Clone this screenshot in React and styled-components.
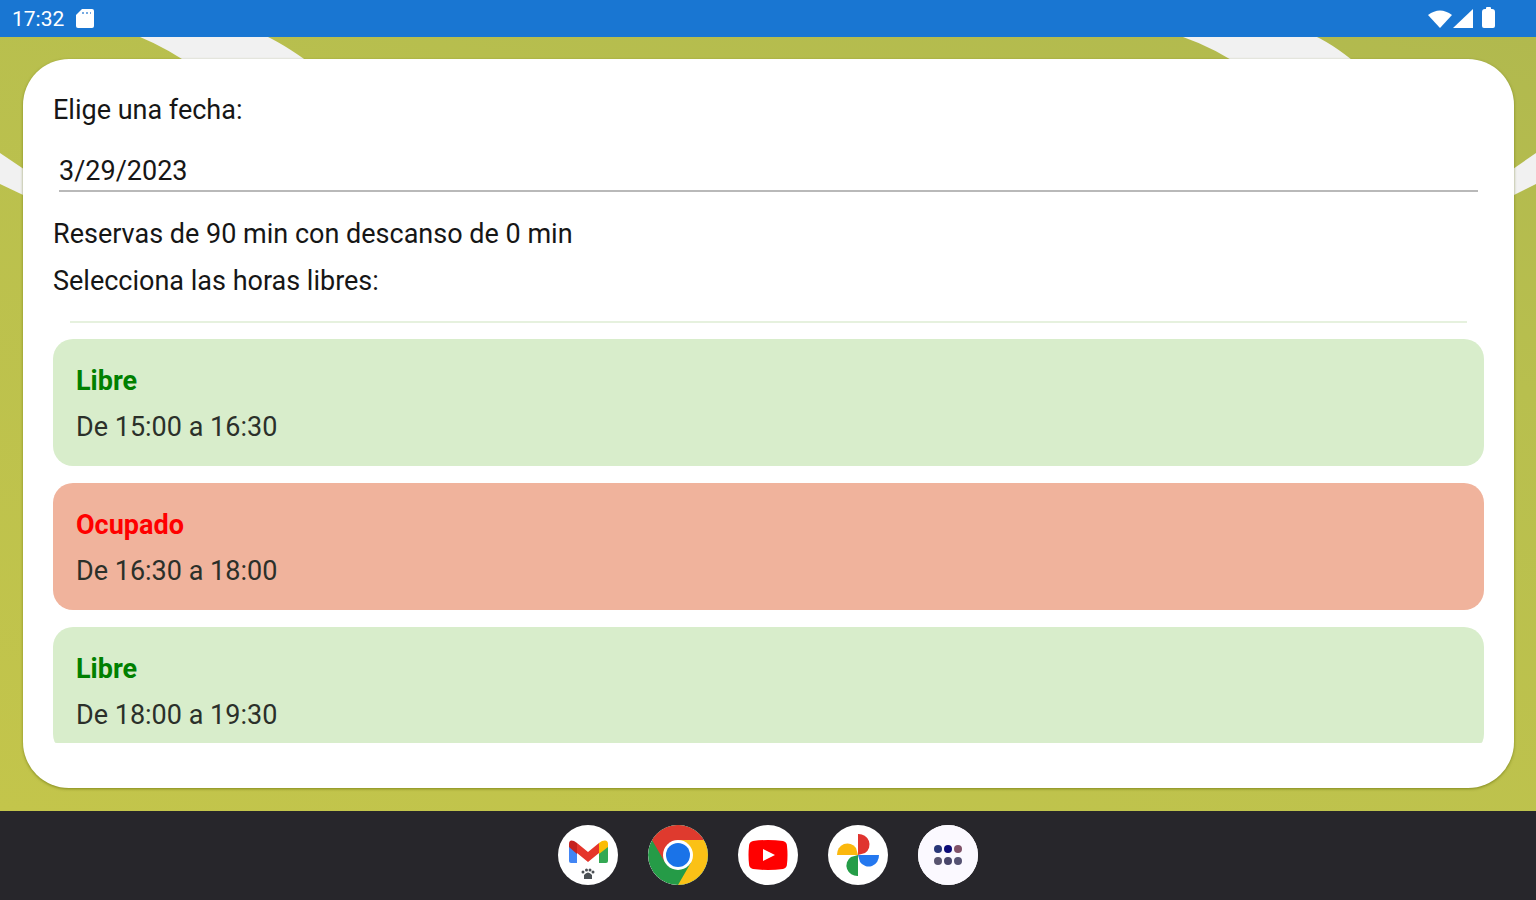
import React from "react";
import styled, { createGlobalStyle } from "styled-components";

const GlobalStyle = createGlobalStyle`
  *, *::before, *::after { box-sizing: border-box; }
  body {
    margin: 0;
    background: #27262b;
    color: #161616;
    font-family: Roboto, "Liberation Sans", sans-serif;
    font-size: 27px;
    line-height: 30px;
  }
`;

const Screen = styled.div`
  display: flex;
  flex-direction: column;
  height: 100vh;
  min-height: 560px;
`;

const StatusBar = styled.header`
  display: flex;
  align-items: center;
  justify-content: space-between;
  flex: none;
  height: 37px;
  padding: 0 40px 0 12px;
  background: #1976d2;
  color: #fff;
`;

const StatusGroup = styled.div`
  display: flex;
  align-items: center;
  gap: 12px;
`;

const Clock = styled.time`
  font-size: 21px;
  line-height: 36px;
`;

const Main = styled.main`
  position: relative;
  display: flex;
  flex: 1;
  min-height: 0;
  padding: 22px 22px 23px 23px;
  background: linear-gradient(195deg, #b1b94e, #b8bf4e 30%, #c3c54b);
`;

const Court = styled.svg`
  position: absolute;
  inset: 0;
  width: 100%;
  height: 100%;
`;

const Panel = styled.section`
  position: relative;
  display: flex;
  flex: 1;
  flex-direction: column;
  min-width: 0;
  padding: 36px 30px 45px;
  border-radius: 46px;
  background: #fff;
  box-shadow: 0 1px 3px rgba(90, 100, 0, 0.6);
`;

const DateLabel = styled.label`
  display: block;
`;

const DateInput = styled.input`
  height: 40px;
  margin: 27px 6px;
  padding: 0;
  border: 0;
  border-bottom: 2px solid #b9b9b9;
  outline: 0;
  background: transparent;
  color: inherit;
  font: inherit;
`;

const Note = styled.p`
  margin: 0 0 17px;
`;

const SlotViewport = styled.div`
  flex: 1;
  min-height: 0;
  margin-top: 8px;
  overflow: hidden;
  border-radius: 0 0 4px 4px;
`;

const Divider = styled.hr`
  height: 2px;
  margin: 0 17px;
  border: 0;
  background: #e6f1de;
`;

const SlotList = styled.ul`
  display: flex;
  flex-direction: column;
  gap: 17px;
  margin: 0;
  padding: 16px 0 0;
  list-style: none;
`;

const Slot = styled.button`
  display: flex;
  flex-direction: column;
  gap: 16px;
  width: 100%;
  padding: 27px 23px 24px;
  border: 0;
  border-radius: 20px;
  background: ${({ $busy }) => ($busy ? "#f0b39c" : "#d8edcb")};
  color: #2b302a;
  font: inherit;
  text-align: left;
`;

const SlotState = styled.strong`
  color: ${({ $busy }) => ($busy ? "#ff0000" : "#008000")};
  font-weight: 700;
`;

const Dock = styled.nav`
  display: flex;
  align-items: center;
  justify-content: center;
  flex: none;
  gap: 30px;
  height: 89px;
  padding-bottom: 1px;
  background: #27262b;
`;

const AppButton = styled.button`
  flex: none;
  width: 60px;
  height: 60px;
  padding: 0;
  border: 0;
  border-radius: 50%;
  background: #fff;
  overflow: hidden;

  svg { display: block; }
`;

const slots = [
  { from: "15:00", to: "16:30", busy: false },
  { from: "16:30", to: "18:00", busy: true },
  { from: "18:00", to: "19:30", busy: false },
];

const Icon = ({ children }) => (
  <svg width="60" height="60" viewBox="0 0 60 60" aria-hidden="true">{children}</svg>
);

const apps = [
  {
    name: "Gmail",
    art: (
      <>
        <path d="M11 20v16q0 2 2 2h6V23z" fill="#4285f4" />
        <path d="M41 23v15h7q2 0 2-2V20z" fill="#34a853" />
        <path d="M41 18l3-2q6-2 6 3v3l-9 7z" fill="#fbbc04" />
        <path d="M19 18l-3-2q-5-2-5 3v3l8 7z" fill="#c5221f" />
        <path d="M19 18l11 9 11-9v10l-11 9-11-9z" fill="#e5352b" />
        <g fill="#4b5054">
          <path d="M26 50q4-5 8 0v4h-8z" />
          <circle cx="25" cy="47" r="1.5" />
          <circle cx="28.5" cy="45" r="1.5" />
          <circle cx="32" cy="45" r="1.5" />
          <circle cx="35" cy="47" r="1.5" />
        </g>
      </>
    ),
  },
  {
    name: "Chrome",
    art: (
      <>
        <circle cx="30" cy="30" r="30" fill="#259b47" />
        <path d="M4 15a30 30 0 0 1 52 0H30L17 37.5z" fill="#df3a2e" />
        <path d="M56 15a30 30 0 0 1-26 45l13-22.5L43 22.5 30 15z" fill="#fbc116" />
        <circle cx="30" cy="30" r="15" fill="#fff" />
        <circle cx="30" cy="30" r="12" fill="#1a73e8" />
      </>
    ),
  },
  {
    name: "YouTube",
    art: (
      <>
        <path d="M15 16q15-2 30 0 4 1 4 5 1 9 0 18 0 4-4 5-15 2-30 0-4-1-4-5-1-9 0-18 0-4 4-5z" fill="#f00" />
        <path d="M25 24l12 6-12 6z" fill="#fff" />
      </>
    ),
  },
  {
    name: "Google Fotos",
    art: (
      <>
        <path d="M30 30V9a11 10.5 0 0 1 7 19z" fill="#e0342f" />
        <path d="M30 30h21a10.500 11 0 0 1-19 7z" fill="#2478ef" />
        <path d="M30 30v21a11 10.500 0 0 1-7-19z" fill="#259d48" />
        <path d="M30 30H9a10.500 11 0 0 1 19-7z" fill="#fbb80d" />
      </>
    ),
  },
  {
    name: "Aplicaciones",
    art: (
      <>
        <rect width="60" height="60" fill="#fbf9ff" />
        <circle cx="20" cy="24" r="4" fill="#283778" />
        <circle cx="30" cy="24" r="4" fill="#0b0b78" />
        <circle cx="40" cy="24" r="4" fill="#805268" />
        <circle cx="20" cy="36" r="4" fill="#58546f" />
        <circle cx="30" cy="36" r="4" fill="#48466a" />
        <circle cx="40" cy="36" r="4" fill="#555272" />
      </>
    ),
  },
];

export default function App() {
  return (
    <Screen>
      <GlobalStyle />
      <StatusBar>
        <StatusGroup>
          <Clock>17:32</Clock>
          <svg width="18" height="19" viewBox="0 0 18 19" fill="#fff" aria-hidden="true">
            <path d="M6 0h10q2 0 2 2v15q0 2-2 2H2q-2 0-2-2V6z" />
            <path d="M6 4h2M10 4h2M14 4h1" stroke="#76aae2" strokeWidth="2" />
          </svg>
        </StatusGroup>
        <StatusGroup>
          <svg width="68" height="24" viewBox="0 0 68 24" fill="#fff" aria-hidden="true">
            <path d="M0 8q12-9 24 0L12 21z" />
            <path d="M25 21L45 2v19z" />
            <path d="M58 2V1q0-1 1-1h3q1 0 1 1v1h1q3 0 3 3v14q0 2-2 2h-9q-2 0-2-2V5q0-3 3-3z" />
          </svg>
        </StatusGroup>
      </StatusBar>

      <Main>
        <Court viewBox="0 0 1536 774" preserveAspectRatio="none" fill="#f1f1f1" aria-hidden="true">
          <path d="M140 0H268Q287 9 318 32H197Q167 11 140 0z" />
          <path d="M1183 0H1317Q1336 9 1363 32H1245Q1215 11 1183 0z" />
          <path d="M0 116L40 143V166L0 147z" />
          <path d="M1536 116L1500 141V165L1536 147z" />
        </Court>
        <Panel>
          <DateLabel htmlFor="fecha">Elige una fecha:</DateLabel>
          <DateInput id="fecha" type="text" defaultValue="3/29/2023" />
          <Note>Reservas de 90 min con descanso de 0 min</Note>
          <Note>Selecciona las horas libres:</Note>
          <SlotViewport>
            <Divider />
            <SlotList>
              {slots.map(({ from, to, busy }) => (
                <li key={from}>
                  <Slot type="button" $busy={busy} disabled={busy}>
                    <SlotState $busy={busy}>{busy ? "Ocupado" : "Libre"}</SlotState>
                    <span>De {from} a {to}</span>
                  </Slot>
                </li>
              ))}
            </SlotList>
          </SlotViewport>
        </Panel>
      </Main>

      <Dock aria-label="Aplicaciones">
        {apps.map(({ name, art }) => (
          <AppButton key={name} type="button" aria-label={name}>
            <Icon>{art}</Icon>
          </AppButton>
        ))}
      </Dock>
    </Screen>
  );
}
